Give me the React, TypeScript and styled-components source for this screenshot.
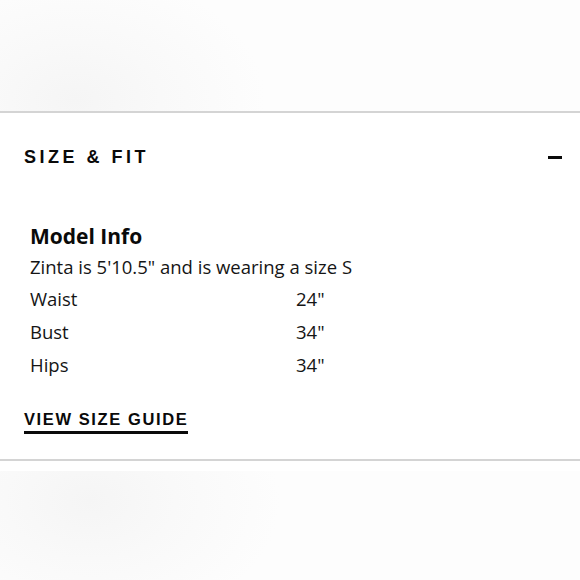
import React from 'react';
import styled, { createGlobalStyle } from 'styled-components';

const GlobalStyle = createGlobalStyle`
  html, body {
    margin: 0;
    padding: 0;
    background: #fff;
  }
  body {
    width: 580px;
    height: 580px;
    overflow: hidden;
    font-family: "Open Sans", "Noto Sans", sans-serif;
    color: #111;
  }
`;

const Page = styled.div`
  display: flex;
  flex-direction: column;
  width: 580px;
  height: 580px;
`;

const Band = styled.div<{ $height: number; $spot: string }>`
  height: ${p => p.$height}px;
  flex-shrink: 0;
  background:
    radial-gradient(ellipse 190px 130px at ${p => p.$spot}, #f5f5f5 0%, #f9f9f9 45%, rgba(253, 253, 253, 0) 100%),
    #fdfdfd;
`;

const Divider = styled.div`
  height: 2px;
  flex-shrink: 0;
  background: #d4d4d4;
`;

const Gap = styled.div`
  height: 10px;
  flex-shrink: 0;
  background: #fff;
`;

const Section = styled.section`
  display: flex;
  flex-direction: column;
  padding: 0 18px 0 24px;
  height: 346px;
  flex-shrink: 0;
  background: #fff;
`;

const Header = styled.div`
  display: flex;
  align-items: center;
  justify-content: space-between;
  height: 88px;
`;

const Title = styled.h2`
  margin: 0;
  font-family: "Liberation Sans", Arial, sans-serif;
  font-weight: 700;
  font-size: 18px;
  letter-spacing: 3.5px;
  color: #0a0a0a;
`;

const Minus = styled.span`
  display: block;
  width: 14px;
  height: 3px;
  background: #0a0a0a;
`;

const Info = styled.div`
  display: flex;
  flex-direction: column;
  padding: 22px 0 0 6px;
`;

const InfoTitle = styled.h3`
  margin: 0 0 5px;
  font-size: 21px;
  font-weight: 700;
  line-height: 26px;
  color: #0a0a0a;
`;

const InfoText = styled.p`
  margin: 0 0 2px;
  font-size: 18.5px;
  line-height: 26px;
  color: #151515;
`;

const MeasureRow = styled.div`
  display: grid;
  grid-template-columns: 266px auto;
  font-size: 18.5px;
  line-height: 33px;
  color: #151515;
`;

const GuideLink = styled.a`
  align-self: flex-start;
  margin-top: 29px;
  padding-bottom: 3px;
  border-bottom: 3px solid #0a0a0a;
  font-family: "Liberation Sans", Arial, sans-serif;
  font-weight: 700;
  font-size: 16.5px;
  letter-spacing: 1.6px;
  line-height: 18px;
  color: #0a0a0a;
  text-decoration: none;
`;

const measurements = [
  { label: 'Waist', value: '24"' },
  { label: 'Bust', value: '34"' },
  { label: 'Hips', value: '34"' },
];

const App = () => (
  <>
    <GlobalStyle />
    <Page>
      <Band $height={111} $spot="75px 100px" />
      <Divider />
      <Section>
        <Header>
          <Title>SIZE &amp; FIT</Title>
          <Minus />
        </Header>
        <Info>
          <InfoTitle>Model Info</InfoTitle>
          <InfoText>Zinta is 5'10.5" and is wearing a size S</InfoText>
          {measurements.map(m => (
            <MeasureRow key={m.label}>
              <span>{m.label}</span>
              <span>{m.value}</span>
            </MeasureRow>
          ))}
        </Info>
        <GuideLink href="#">VIEW SIZE GUIDE</GuideLink>
      </Section>
      <Divider />
      <Gap />
      <Band $height={109} $spot="90px 30px" />
    </Page>
  </>
);

export default App;
